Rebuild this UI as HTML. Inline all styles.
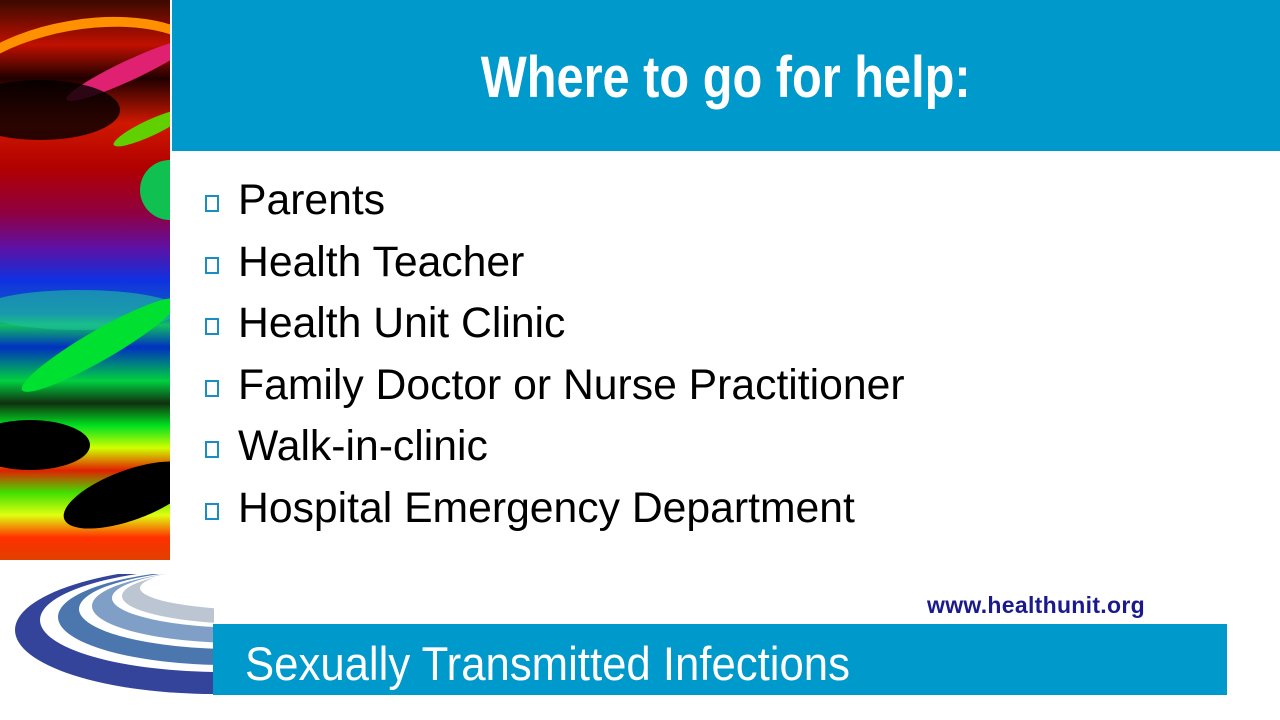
<!DOCTYPE html>
<html><head><meta charset="utf-8"><style>
body{margin:0;width:1280px;height:720px;background:#fff;position:relative;overflow:hidden;font-family:"Liberation Sans",Arial,sans-serif}
.art{position:absolute;left:0;top:0;width:170px;height:560px;overflow:hidden;
background:linear-gradient(180deg,#3a0a00 0%,#c01000 8%,#200000 14%,#d01800 22%,#b00000 30%,#900040 38%,#6010a0 44%,#1030e0 50%,#1060c0 56%,#10c060 58%,#0030c0 62%,#00d040 68%,#103010 72%,#00e020 76%,#d0ff00 80%,#e02000 84%,#40e000 88%,#e0ff10 92%,#ff3000 96%,#e04000 100%)}
.art div{position:absolute;border-radius:50%}
.hdr{position:absolute;left:172px;top:0;width:1108px;height:151px;background:#0099cc}
.hdr span{position:absolute;left:0;width:1108px;text-align:center;top:0;color:#fff;font-weight:bold;font-size:58px;line-height:156px;transform:scaleX(0.84);transform-origin:552px 0}
ul{position:absolute;left:204px;top:176px;margin:0;padding:0;list-style:none}
li{font-size:42.7px;height:61.5px;line-height:48px;color:#000;position:relative;padding-left:34px;white-space:nowrap}
li:before{content:"";position:absolute;left:1px;top:19px;width:10px;height:13px;border:2px solid #1a8ec0}
.url{position:absolute;left:927px;top:592px;color:#1a1a8c;font-weight:bold;font-size:23px;letter-spacing:0.3px}
.band{position:absolute;left:213px;top:624px;width:1014px;height:71px;background:#0099cc;overflow:hidden}
.band span{position:absolute;left:32px;top:0;color:#fff;font-size:47px;line-height:80px;white-space:nowrap;transform:scaleX(0.93);transform-origin:0 0}
</style></head><body>
<div class="art">
<div style="left:-60px;top:20px;width:260px;height:120px;border:10px solid #1020d0;border-color:#ff9000 transparent transparent transparent;transform:rotate(-10deg)"></div>
<div style="left:60px;top:60px;width:140px;height:20px;background:#e02070;transform:rotate(-25deg)"></div>
<div style="left:110px;top:120px;width:80px;height:16px;background:#60d000;transform:rotate(-25deg)"></div>
<div style="left:-40px;top:80px;width:160px;height:60px;background:#000;opacity:.8"></div>
<div style="left:140px;top:160px;width:60px;height:60px;background:#10c050"></div>
<div style="left:-20px;top:290px;width:200px;height:40px;background:#20c0a0;opacity:.6"></div>
<div style="left:10px;top:330px;width:180px;height:30px;background:#00e030;transform:rotate(-30deg)"></div>
<div style="left:-30px;top:420px;width:120px;height:50px;background:#000"></div>
<div style="left:60px;top:470px;width:140px;height:50px;background:#000;transform:rotate(-20deg)"></div>
</div>
<div class="hdr"><span>Where to go for help:</span></div>
<ul>
<li>Parents</li><li>Health Teacher</li><li>Health Unit Clinic</li><li>Family Doctor or Nurse Practitioner</li><li>Walk-in-clinic</li><li>Hospital Emergency Department</li>
</ul>
<svg style="position:absolute;left:0;top:560px" width="214" height="160">
<ellipse cx="215" cy="70" rx="200" ry="64" fill="#34449a"/>
<ellipse cx="222" cy="60" rx="182" ry="52" fill="#fff"/>
<ellipse cx="228" cy="57" rx="170" ry="48" fill="#4b77ae"/>
<ellipse cx="235" cy="49" rx="156" ry="40" fill="#fff"/>
<ellipse cx="240" cy="46" rx="148" ry="37" fill="#809fc6"/>
<ellipse cx="248" cy="38" rx="136" ry="30" fill="#fff"/>
<ellipse cx="252" cy="36" rx="130" ry="28" fill="#bcc6d2"/>
<ellipse cx="262" cy="28" rx="122" ry="22" fill="#fff"/>
<rect x="0" y="0" width="260" height="14" fill="#fff"/>
</svg>
<div class="url">www.healthunit.org</div>
<div class="band"><span>Sexually Transmitted Infections</span></div>
</body></html>
